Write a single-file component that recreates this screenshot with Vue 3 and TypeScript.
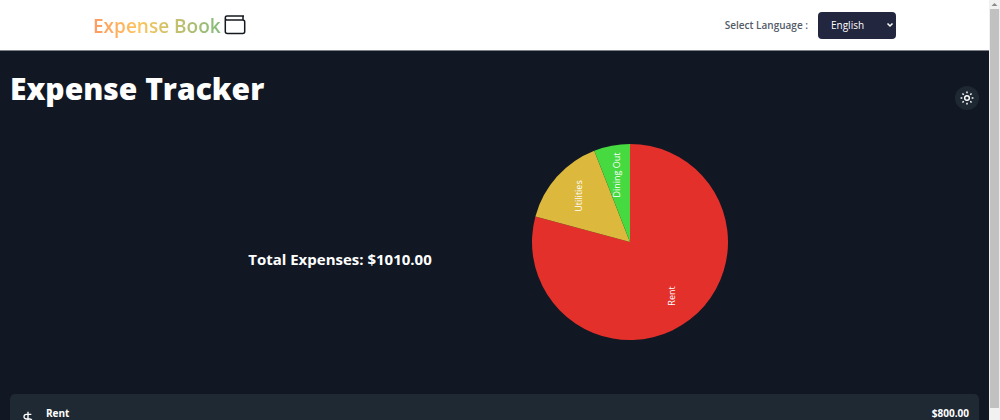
<script setup lang="ts">
import { computed, ref } from 'vue'

interface Expense {
  name: string
  amount: number
  color: string
  labelX: number
  labelY: number
}

const language = ref('en')
const expenses = ref<Expense[]>([
  { name: 'Rent', amount: 800, color: '#e3302b', labelX: 41, labelY: 54 },
  { name: 'Utilities', amount: 150, color: '#dcb93d', labelX: -52, labelY: -46 },
  { name: 'Dining Out', amount: 60, color: '#46d940', labelX: -14, labelY: -67 },
])

const total = computed(() => expenses.value.reduce((sum, e) => sum + e.amount, 0))

const slices = computed(() => {
  const radius = 98
  let turned = 0
  return expenses.value.map((e) => {
    const from = (turned / total.value) * Math.PI * 2
    turned += e.amount
    const to = (turned / total.value) * Math.PI * 2
    const point = (a: number) => `${radius * Math.sin(a)} ${-radius * Math.cos(a)}`
    const large = to - from > Math.PI ? 1 : 0
    return { ...e, path: `M0 0L${point(from)}A${radius} ${radius} 0 ${large} 1 ${point(to)}Z` }
  })
})

const money = (value: number) => `$${value.toFixed(2)}`
</script>

<template>
  <div class="window">
    <div class="page">
      <header class="topbar">
        <a class="brand" href="#">
          <span class="brand-name">Expense Book</span>
          <svg class="brand-icon" viewBox="0 0 22 20" aria-hidden="true">
            <path d="M1.300 3V16.500a2 2 0 0 0 2 2H18.700a2 2 0 0 0 2-2V7a2 2 0 0 0-2-2H3Q1.300 5 1.300 3Q1.300 1 3 1H20M19 1V5" />
          </svg>
        </a>
        <div class="language">
          <label for="language">Select Language :</label>
          <span class="select-box">
            <select id="language" v-model="language">
              <option value="en">English</option>
            </select>
            <svg class="chevron" viewBox="0 0 8 6" aria-hidden="true"><path d="M1.500 1.500L4 4L6.500 1.500" /></svg>
          </span>
        </div>
      </header>

      <main>
        <div class="heading">
          <h1>Expense Tracker</h1>
          <button class="theme" type="button" aria-label="Toggle theme">
            <svg viewBox="0 0 24 24" aria-hidden="true">
              <circle cx="12" cy="12" r="4" />
              <path d="M12 1v3M12 20v3M1 12h3M20 12h3M4.200 4.200l2.200 2.200M17.600 17.600l2.200 2.200M4.200 19.800l2.200-2.200M17.600 6.400l2.200-2.200" />
            </svg>
          </button>
        </div>

        <section class="summary">
          <h2>Total Expenses: {{ money(total) }}</h2>
          <svg class="pie" viewBox="-98 -98 196 196" role="img" aria-label="Expenses by category">
            <path v-for="s in slices" :key="s.name" :d="s.path" :fill="s.color" />
            <text
              v-for="s in slices"
              :key="s.name"
              :transform="`translate(${s.labelX} ${s.labelY}) rotate(-90)`"
              text-anchor="middle"
              dominant-baseline="central"
            >{{ s.name }}</text>
          </svg>
        </section>

        <ul class="list">
          <li v-for="e in expenses" :key="e.name" class="item">
            <svg class="currency" viewBox="0 0 24 24" aria-hidden="true">
              <path d="M12 1V23M17 5H9.500a3.500 3.500 0 0 0 0 7h5a3.500 3.500 0 0 1 0 7H6" />
            </svg>
            <span class="name">{{ e.name }}</span>
            <span class="amount">{{ money(e.amount) }}</span>
          </li>
        </ul>
      </main>
    </div>
    <div class="scrollbar" aria-hidden="true">
      <svg viewBox="0 0 10 9"><path d="M2 6L5 3L8 6Z" /></svg>
      <div class="thumb"></div>
    </div>
  </div>
</template>

<style>
body {
  background: #111823;
}
</style>

<style scoped>
* {
  box-sizing: border-box;
}
.window {
  display: flex;
  height: 100vh;
  overflow: hidden;
  font-family: "Open Sans", "Noto Sans", sans-serif;
  color: #fff;
}
.page {
  flex: 1;
  min-width: 0;
}
.topbar {
  display: flex;
  align-items: center;
  justify-content: space-between;
  height: 51px;
  padding: 0 93px;
  background: #fff;
  border-bottom: 1px solid #7b7f87;
}
.brand {
  display: flex;
  align-items: center;
  gap: 3px;
  text-decoration: none;
}
.brand-name {
  padding-top: 2px;
  font-size: 19px;
  font-weight: 600;
  line-height: 28px;
  color: transparent;
  background: linear-gradient(90deg, #ff9a62, #fcc45c 36%, #82bb7c);
  background-clip: text;
}
.brand-icon {
  width: 22px;
  height: 20px;
  fill: none;
  stroke: #15181f;
  stroke-width: 1.500;
}
.language {
  display: flex;
  align-items: center;
  gap: 10px;
  font-size: 10px;
}
.language label {
  font-weight: 600;
  color: #535b68;
}
.select-box {
  display: grid;
  align-items: center;
}
.select-box > * {
  grid-area: 1 / 1;
}
.select-box select {
  width: 78px;
  height: 27px;
  padding: 0 13px;
  appearance: none;
  font-family: inherit;
  font-size: 10px;
  color: #fff;
  background: #22263f;
  border: 0;
  border-radius: 4px;
}
.chevron {
  width: 8px;
  height: 6px;
  margin-right: 2px;
  justify-self: end;
  fill: none;
  stroke: #fff;
  stroke-width: 1.500;
  pointer-events: none;
}
main {
  padding: 0 10px;
}
.heading {
  display: flex;
  justify-content: space-between;
  height: 59px;
}
h1 {
  margin: 16px 0 0;
  font-size: 30px;
  font-weight: 800;
  line-height: 44px;
}
.theme {
  display: grid;
  place-items: center;
  align-self: flex-end;
  width: 24px;
  height: 24px;
  padding: 0;
  background: #1e2833;
  border: 0;
  border-radius: 50%;
}
.theme svg {
  width: 14px;
  height: 14px;
  fill: none;
  stroke: #fff;
  stroke-width: 2.500;
}
.summary {
  display: flex;
  align-items: flex-start;
  justify-content: center;
  gap: 100px;
  margin-top: 34px;
  padding-right: 13px;
}
h2 {
  margin: 105px 0 0;
  font-size: 15px;
  font-weight: 700;
  line-height: 20px;
  white-space: nowrap;
}
.pie {
  width: 196px;
  height: 196px;
}
.pie text {
  font-size: 9px;
  fill: #fff;
}
.list {
  display: grid;
  gap: 10px;
  margin: 54px 0 0;
  padding: 0;
  list-style: none;
}
.item {
  display: flex;
  align-items: flex-start;
  padding: 12px 10px;
  background: #1f2933;
  border-radius: 5px;
  font-size: 10px;
  font-weight: 700;
  line-height: 14px;
}
.currency {
  width: 16px;
  height: 16px;
  margin: 5px 10px 0 0;
  fill: none;
  stroke: #fff;
  stroke-width: 2;
}
.amount {
  margin-left: auto;
}
.scrollbar {
  display: flex;
  flex-direction: column;
  width: 11px;
  background: #f1f1f1;
}
.scrollbar svg {
  width: 11px;
  height: 9px;
  fill: #8b8b8b;
}
.thumb {
  height: 95%;
  margin: 0 1px;
  background: #c1c1c1;
}
</style>
